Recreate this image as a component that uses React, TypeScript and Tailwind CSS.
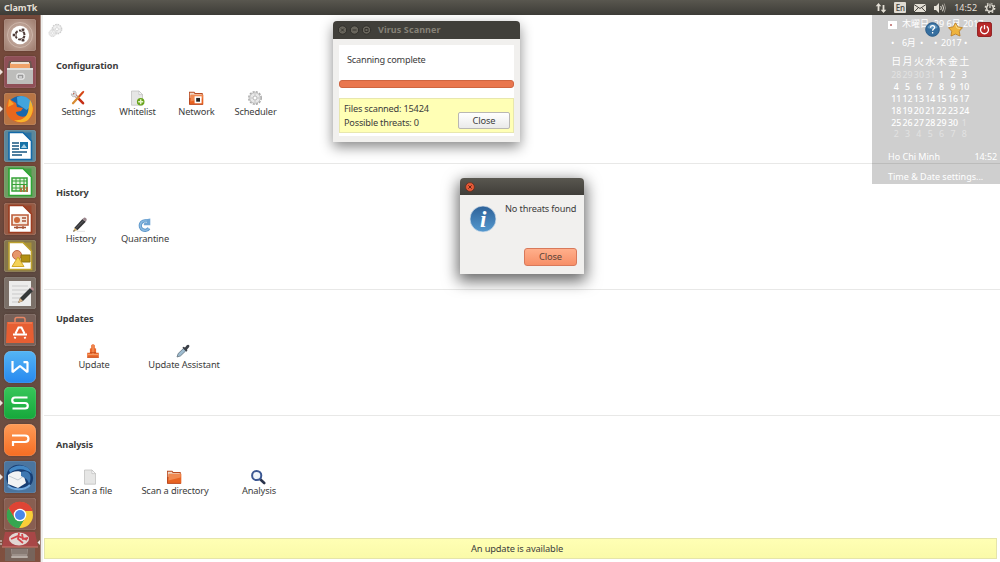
import React from "react";

type Item = { label: string; icon: React.ReactNode };

const Svg = ({ children, className = "h-4 w-4" }: { children: React.ReactNode; className?: string }) => (
  <svg viewBox="0 0 16 16" className={className} fill="none">{children}</svg>
);

const Sheet = () => (
  <>
    <path d="M2.5 1h7.4l3.6 3.6v10.6h-11z" fill="#e6e6e5" stroke="#bcbcba" strokeWidth=".7" />
    <path d="M9.9 1v3.6h3.6z" fill="#fafafa" stroke="#b0b0b0" strokeWidth=".5" />
  </>
);

const Pencil = () => (
  <>
    <path d="M5 14.3h8" stroke="#ccc" strokeWidth=".6" />
    <path d="M1.3 14.7l1.1-4 3 2.5z" fill="#d8b878" />
    <path d="M1.3 14.7l.5-1.6 1.1.9z" fill="#222" />
    <path d="M2.4 10.7L10.4 2l3.4 2.8-8.4 8.4z" fill="#343436" />
    <path d="M4 11.5l8-8.3" stroke="#707074" strokeWidth=".8" />
    <path d="M10.4 2l1.6-1.3c1.1-.5 3 1 2.7 2.2l-.9 1.9z" fill="#9a858c" />
  </>
);

const Folder = () => (
  <>
    <path d="M1 1.8h5.3l1 1.3h7.4v11.4H1z" fill="#b84a20" />
    <path d="M1.8 2.7h4.1l.7 1.3H13.8V8h-12z" fill="#f0d9c8" />
    <path d="M2.7 4.7h12.6v9.7H1.8z" fill="#e86322" />
    <path d="M2.7 5h12.2l-.4 3.5-12 3z" fill="#f08a52" />
    <path d="M1.2 14.4h13.8" stroke="#aa3510" strokeWidth=".6" />
  </>
);

const Gear = () => (
  <>
    <circle cx="8" cy="8" r="6.2" stroke="#a9a9a9" strokeWidth="1.5" strokeDasharray="2.1 1.15" />
    <circle cx="8" cy="8" r="5.3" fill="#e8e8e8" stroke="#b0b0b0" strokeWidth=".7" />
    <circle cx="8" cy="8" r="2" fill="#fff" stroke="#aaa" strokeWidth=".8" />
    <path d="M8 3.4v2.2M8 10.4v2.2M3.4 8h2.2M10.4 8h2.2" stroke="#bbb" strokeWidth=".8" />
  </>
);

const sections: { title: string; cell: string; height: string; items: Item[] }[] = [
  {
    title: "Configuration", cell: "w-[59px]", height: "h-[126px]",
    items: [
      { label: "Settings", icon: <Svg><path d="M4.2 4.2l8.8 9" stroke="#c62f17" strokeWidth="2.6" strokeLinecap="round" /><path d="M12.7 2.6L3 13.3" stroke="#d88c32" strokeWidth="2.2" strokeLinecap="round" /><path d="M13.8 1.3L9 6.8" stroke="#d63b1b" strokeWidth="1.5" /><path d="M5.4 1.4c-1-.4-1.9-.3-2.5.1l1.5 1.8-1.1 1.3-2-.9c-.3 2 1.6 3.8 3.7 2.9l1.5 1.4 1.2-1.2-1.7-1.8c.5-1.6.1-2.8-.6-3.6z" fill="#dedede" stroke="#999" strokeWidth=".5" /></Svg> },
      { label: "Whitelist", icon: <Svg><Sheet /><circle cx="11.7" cy="11.7" r="3.8" fill="#68a41c" /><path d="M11.7 9.2v5M9.2 11.7h5" stroke="#e8f4cd" strokeWidth="1.5" /></Svg> },
      { label: "Network", icon: <Svg><Folder /><path d="M6.6 6.3h7v7h-7z" fill="#fff" /><path d="M8.2 7.9h3.8v3.8H8.2z" fill="#222" /></Svg> },
      { label: "Scheduler", icon: <Svg><Gear /></Svg> },
    ],
  },
  {
    title: "History", cell: "w-16", height: "h-[126px]",
    items: [
      { label: "History", icon: <Svg><Pencil /></Svg> },
      { label: "Quarantine", icon: <Svg><path d="M12.9 11.2A4.7 4.7 0 1 1 10.6 4.2" stroke="#5f98cb" strokeWidth="3.4" /><path d="M14.3 1.5v6.8H7.8V6.2l3-.4-2-3.3z" fill="#6fa5d4" /><path d="M12.9 11.2A4.7 4.7 0 1 1 10.6 4.2" stroke="#8abae1" strokeWidth="1.5" /></Svg> },
    ],
  },
  {
    title: "Updates", cell: "w-[90px]", height: "h-[126px]",
    items: [
      { label: "Update", icon: <Svg><path d="M6.2 2.2q1.8-2 3.6 0v3l1.3.3v4.2h2.7v5H2.2v-5h2.7V5.5l1.3-.3z" fill="#e9692c" /><path d="M8 2v9M3 11.6h10" stroke="#f6a16d" strokeWidth="1" /><path d="M2.2 14.3h11.6M4.9 9.6h6.2" stroke="#bb4414" strokeWidth=".7" /></Svg> },
      { label: "Update Assistant", icon: <Svg><path d="M2 14l1.2-3.5 5.2-5 2.4 2.3-5.3 5.1z" fill="#9ebcd0" stroke="#62727e" strokeWidth=".8" /><path d="M7.4 4.8l1.2-1 1.4.7 1.8-2.2c1.4-1.5 3.6.2 2.2 2l-2 2.2.4 1.1-1 1.2z" fill="#3c4048" /></Svg> },
    ],
  },
  {
    title: "Analysis", cell: "w-[84px]", height: "h-[120px]",
    items: [
      { label: "Scan a file", icon: <Svg><Sheet /></Svg> },
      { label: "Scan a directory", icon: <Svg><Folder /></Svg> },
      { label: "Analysis", icon: <Svg><path d="M10.2 10.2l4 3.8" stroke="#29334b" strokeWidth="2.6" strokeLinecap="round" /><circle cx="6.7" cy="6.5" r="4.6" fill="#eef4fa" stroke="#3b5792" strokeWidth="2" /><path d="M4.4 6c.3-1.2 1-1.8 2.2-1.9" stroke="#fff" strokeWidth="1" /></Svg> },
    ],
  },
];

const LogoSvg = ({ children }: { children: React.ReactNode }) => (
  <svg viewBox="0 0 32 32" className="h-full w-full" fill="none">{children}</svg>
);

const Office = ({ color, children }: { color: string; children: React.ReactNode }) => (
  <LogoSvg>
    <path d="M5 2.5h14L27.5 11v18.5H5z" fill="#fff" stroke={color} strokeWidth="1.6" />
    <path d="M19 2.5L27.5 11V2.5z" fill={color} opacity=".65" />
    {children}
  </LogoSvg>
);

const launcher: { bg: string; running?: boolean; icon: React.ReactNode }[] = [
  { bg: "rounded-[3px] bg-[radial-gradient(circle,#d5c0b5,#9a7769)]", icon: <LogoSvg><circle cx="16" cy="16" r="12.5" stroke="#cdb5a9" strokeWidth="1" /><circle cx="16" cy="16" r="9.2" fill="#fff" /><circle cx="16" cy="16" r="4.5" stroke="#4e3b38" strokeWidth="2" strokeDasharray="7.9 1.52" strokeDashoffset="-.8" /><g fill="#4e3b38" stroke="#fff" strokeWidth=".6"><circle cx="10" cy="16" r="1.8" /><circle cx="19" cy="10.8" r="1.8" /><circle cx="19" cy="21.2" r="1.8" /></g></LogoSvg> },
  { bg: "rounded-[3px] bg-[#8f4f57]", running: true, icon: <LogoSvg><path d="M5 5h22l2 9H3z" fill="#6d5650" /><path d="M6 7h20v5H6z" fill="#f0a269" /><path d="M7 6h18v2H7z" fill="#eee1d3" /><path d="M3 12h26v16H3z" fill="#bdbdbb" /><path d="M3 12h26v2H3z" fill="#dededd" /><rect x="13" y="18" width="7" height="5" rx="1" fill="#999" stroke="#fff" /><path d="M15 21h3" stroke="#fff" /></LogoSvg> },
  { bg: "rounded-[3px] bg-[#b87545]", running: true, icon: <LogoSvg><circle cx="16" cy="16" r="13" fill="#1767ad" /><path d="M13 4c7-3 14 2 15.5 8l-6 5-9-6z" fill="#42a4dd" /><path d="M5 6c-3 5-4 12-1 17 5 8 18 9 23 1 3-4 3-9 2-13-1 7-3 10-7 12-5 2-10-1-10-4l5-1 2-3-6-1-1-4z" fill="#e9671d" /><path d="M26 7c5 7 3 15-2 20-4 3-10 3-14 0 7 1 12-2 14-8z" fill="#f7b32b" /><path d="M5 6l-1 8 6-3z" fill="#f7a22b" /></LogoSvg> },
  { bg: "rounded-[3px] bg-[#5c879b]", icon: <Office color="#1269a8"><path d="M8 13h7M8 16h7M8 19h7M8 22h15M8 25h10" stroke="#165580" strokeWidth="1.6" /><path d="M16 12h8v7h-8z" fill="#1672a7" /><path d="M17 18l3-4 3 4z" fill="#a8d2e6" /></Office> },
  { bg: "rounded-[3px] bg-[#719c64]", icon: <Office color="#2ca533"><path d="M8 12h15v13H8z" fill="#e4f4dc" stroke="#36a238" strokeWidth="1.5" /><path d="M12 12v13M16 12v13M20 12v13M8 15h15M8 18.5h15M8 22h15" stroke="#36a238" /><path d="M17 26v-4M20 26v-7M23 26v-5" stroke="#a8773c" strokeWidth="2" /></Office> },
  { bg: "rounded-[3px] bg-[#965b45]", icon: <Office color="#9c3c20"><path d="M8 12h16v10H8z" fill="#f5e7dc" stroke="#bd5d3a" strokeWidth="1.6" /><circle cx="13" cy="17" r="3" fill="#cc693b" /><path d="M18 15h4M18 18h4M13 23v3M19 23v3M10 24.5h12" stroke="#a65236" strokeWidth="1.3" /></Office> },
  { bg: "rounded-[3px] bg-[#85764c]", icon: <Office color="#bba02e"><circle cx="13" cy="15" r="4.5" fill="#e6976c" stroke="#c26747" /><path d="M17 15h9v7h-9z" fill="#b29013" stroke="#8d730e" /><path d="M14 17l6 9.5H8z" fill="#f4d257" stroke="#d1a729" /></Office> },
  { bg: "rounded-[3px] bg-[#7b7068]", icon: <LogoSvg><path d="M5 4h22v25H5z" fill="#ececeb" /><path d="M8 9h16M8 13h16M8 17h16M8 21h10M8 25h8" stroke="#c9c9c9" /><path d="M14 26l2-5 10-10 3 3-10 10z" fill="#343838" /><path d="M14 26l2-5 3 3z" fill="#d5b184" /><path d="M26 11l2-1 2 2-1 2z" fill="#b58a90" /></LogoSvg> },
  { bg: "rounded-[3px] bg-[#776159]", icon: <LogoSvg><path d="M11 9V5.5q0-2 2-2h6q2 0 2 2V9" stroke="#e88563" strokeWidth="1.5" /><path d="M3 8h26l1 21H2z" fill="#e75e32" /><path d="M4 9h24" stroke="#f18a64" /><path d="M11.5 19.5l3-6h3l3 6M9 20.5h14M11.5 23l-1 1.5M20.5 23l1 1.5" stroke="#fff" strokeWidth="2" /></LogoSvg> },
  { bg: "rounded-[7px] bg-[linear-gradient(#55b5f4,#2688f0)]", icon: <LogoSvg><path d="M8.5 10v11.2l7.5-6.2 7.5 6.2V11.2h-4" stroke="#fff" strokeWidth="2.2" strokeLinejoin="bevel" /></LogoSvg> },
  { bg: "rounded-[5px] bg-[linear-gradient(#38c65a,#16a83b)]", running: true, icon: <LogoSvg><path d="M23.5 10.5H11c-3.7 0-3.7 5.5 0 5.5h10c3.7 0 3.7 5.5 0 5.5H8.5" stroke="#fff" strokeWidth="2.2" /></LogoSvg> },
  { bg: "rounded-[7px] bg-[linear-gradient(#ff9b57,#f56d23)]", icon: <LogoSvg><path d="M8 11.5h13c4.6 0 4.6 6.5 0 6.5H9v4" stroke="#fff" strokeWidth="2.2" /></LogoSvg> },
  { bg: "rounded-[3px] bg-[#4b759f]", running: true, icon: <LogoSvg><path d="M5 8c8-9 23-3 24 8 1 9-9 15-18 12C2 25 0 15 5 8z" fill="#173d73" /><path d="M5 9C12 2 25 3 28 13c-7-6-16-6-22-1z" fill="#4387c4" /><path d="M4 14c4-4 11-5 15-2l3 10-8 5-10-4z" fill="#f2f3f4" /><path d="M5 15l9 4 6-4" stroke="#c3cbd2" /><path d="M17 11c8-3 12 4 8 12-1-5-4-6-8-8z" fill="#3e77b1" /><path d="M4 25c5 4 16 5 22-1" stroke="#74abe0" strokeWidth="2" /></LogoSvg> },
  { bg: "rounded-[3px] bg-[#885e51]", icon: <LogoSvg><circle cx="16" cy="17" r="13" fill="#f9ce38" /><path d="M4.7 10.5A13 13 0 0 1 28.5 13H16z" fill="#de4435" /><path d="M4.5 10.5A13 13 0 0 0 15 30l6-10-10 0z" fill="#36a650" /><path d="M4.7 10.5L11 21l5-8h12.5A13 13 0 0 0 4.7 10.5" fill="#de4435" /><path d="M4.7 10.5A13 13 0 0 0 15 30l5.5-9.5H10.5z" fill="#36a650" /><circle cx="16" cy="17" r="6.3" fill="#fff" /><circle cx="16" cy="17" r="5" fill="#4a87e8" /></LogoSvg> },
];

const TopBar = () => (
  <header className="flex h-[15px] shrink-0 items-center justify-between bg-linear-to-b from-[#59574f] to-[#3d3c37] pr-1 pl-1 text-[#e3dfd5]">
    <span className="text-[9px] font-bold tracking-normal">ClamTk</span>
    <div className="flex items-center">
      <svg viewBox="0 0 12 12" className="mr-[7px] h-3 w-3" fill="currentColor"><path d="M3.5 1L6.3 4.2H4.4V9H2.6V4.2H.7zM8.5 11L5.7 7.8h1.9V3h1.8v4.8h1.9z" /></svg>
      <span className="mr-[8px] flex h-[11px] w-3 items-center justify-center rounded-[1px] bg-[#dfdbd2] text-[8px] font-medium text-[#45433d]">En</span>
      <svg viewBox="0 0 12 8" className="mr-[8px] h-2 w-3"><path d="M0 0h12v8H0z" fill="#e3dfd5" /><path d="M0 .5l6 4 6-4M0 8l4.4-4.3M12 8L7.6 3.7" stroke="#47453f" fill="none" /></svg>
      <svg viewBox="0 0 12 12" className="mr-[8px] h-3 w-3" fill="none" stroke="currentColor"><path d="M0 4h2l3-3v10L2 8H0z" fill="currentColor" stroke="none" /><path d="M6.7 4q1.3 2 0 4M8.5 2.7q2 3.3 0 6.6" /><path d="M10.2 1.5q2.5 4.5 0 9" opacity=".5" /></svg>
      <span className="mr-[7px] text-[9px] tracking-[-0.05px]">14:52</span>
      <svg viewBox="0 0 12 12" className="h-3 w-3" fill="none" stroke="currentColor"><circle cx="6" cy="6" r="3.3" strokeWidth="1.4" /><circle cx="6" cy="6" r="4.7" strokeWidth="1.4" strokeDasharray="1.8 1.89" /><path d="M6 1v5" stroke="#4b4943" strokeWidth="2.8" /><path d="M6 1.5v4.5" strokeWidth="1.2" /></svg>
    </div>
  </header>
);

const Launcher = () => (
  <nav className="flex w-[41px] shrink-0 flex-col overflow-hidden border-r border-[#a68b81] bg-linear-to-b from-[#74493b] from-35% via-[#594a43] via-50% to-[#80503f] pt-[4px]">
    {launcher.map((l, i) => (
      <div key={i} className="flex h-[36.85px] w-10 shrink-0 items-start">
        <svg viewBox="0 0 4 8" className="mt-[12px] h-2 w-1"><path d="M0 1l3 3-3 3z" fill={l.running ? "#eee2da" : "none"} /></svg>
        <div className={`h-8 w-8 shadow-[inset_0_0_1px_#ffffffaa,0_0_2px_#3b211988] ${l.bg}`}>{l.icon}</div>
      </div>
    ))}
    <svg viewBox="0 0 40 32" className="-mt-[5px] h-8 w-10 shrink-0" fill="none">
      <path d="M5 2h30l3 15H2z" fill="#a84747" />
      <ellipse cx="19" cy="9" rx="10" ry="6.5" fill="#e1d7d2" />
      <path d="M11 9l7-3 9 4M19 3l-1 6 5 4M22 4l1 5 5-1" stroke="#d3454b" strokeWidth="1.8" />
      <path d="M2 17h36" stroke="#c77e75" />
      <path d="M0 11h2M0 14h2" stroke="#eee" />
      <path d="M40 10l-2.5 2.5L40 15z" fill="#eee" />
      <path d="M5 18h30v13H5z" fill="#77645b" />
      <path d="M11 19h17l-1 9H12z" fill="#9c9089" />
      <path d="M12 19h15v5H12z" fill="#887b74" />
      <path d="M11 27h17" stroke="#d0c7c0" />
    </svg>
  </nav>
);

const days = [28, 29, 30, 31, ...Array.from({ length: 30 }, (_, i) => i + 1), 1, 2, 3, 4, 5, 6, 7, 8];

const CalendarOverlay = () => (
  <aside className="absolute top-[15px] right-0 h-[169px] w-32 overflow-hidden bg-black/19 text-[9px] leading-3 tracking-normal text-white">
    <div className="flex h-[18px] items-center gap-[5px] pl-4 whitespace-nowrap">
      <svg viewBox="0 0 9 9" className="h-[9px] w-[9px]"><path d="M0 1h9v8H0z" fill="#fff" /><path d="M2 4h2v2H2z" fill="#c98a8a" /></svg>
      <span>木曜日, 29 6月 2017</span>
    </div>
    <div className="flex h-[19px] items-center pl-[19px]">
      <span className="w-[11px]">•</span><span className="w-[18px] tracking-[-0.3px]">6月</span><span className="w-[14px]">•</span><span className="w-[7px]">•</span><span className="w-[23px]">2017</span><span>•</span>
    </div>
    <div className="grid h-[17px] w-[98px] grid-cols-7 items-center pl-[18.5px] text-center text-[10px]">
      {"日月火水木金土".split("").map((d) => <span key={d}>{d}</span>)}
    </div>
    <div className="grid w-[98px] auto-rows-[11.9px] grid-cols-7 items-center pl-[18.5px] text-center text-[8.8px]">
      {days.map((d, i) => <span key={i} className={i < 4 || i > 33 ? "opacity-40" : "font-medium"}>{d}</span>)}
    </div>
    <div className="mt-[11px] flex justify-between pr-[3px] pl-4 text-[9px]"><span>Ho Chi Minh</span><span className="tracking-[-0.1px]">14:52</span></div>
    <div className="mt-[8px] pl-4 text-[9px]">Time &amp; Date settings...</div>
  </aside>
);

const HeaderButtons = () => (
  <div className="absolute top-[22px] right-2 flex items-center">
    <svg viewBox="0 0 15 15" className="mr-px h-[15px] w-[15px]"><circle cx="7.5" cy="7.5" r="6.8" fill="#356e9f" stroke="#295b88" /><path d="M2.5 6a5.2 5.2 0 0 1 10 0q-5 2-10 0" fill="#6297bf" /><path d="M5.5 5.7c.1-3 4.5-2.5 4.1 0-.2 1.3-2 1.5-2 3M7.6 10v1.4" fill="none" stroke="#fff" strokeWidth="1.3" /></svg>
    <svg viewBox="0 0 15 15" className="ml-[7px] h-[15px] w-[15px]"><path d="M7.5.8l2.3 4 4.7.9-3.2 3.5.7 4.8-4.5-1.9L3 14l.7-4.8L.5 5.7l4.7-.9z" fill="#eeb33d" stroke="#b77a22" strokeWidth=".8" strokeLinejoin="round" /><path d="M7.5 2.7L9 6l3 .5" fill="none" stroke="#fbdc88" /></svg>
    <svg viewBox="0 0 15 15" className="ml-[14px] h-[15px] w-[15px]"><rect x=".6" y=".6" width="13.8" height="13.8" rx="1.5" fill="#b92929" stroke="#8d1b1c" /><path d="M5.3 4.4a4 4 0 1 0 4.4 0M7.5 3v4.3" fill="none" stroke="#fff" strokeWidth="1.3" /></svg>
  </div>
);

const MainWindow = () => (
  <main className="flex min-w-0 flex-1 flex-col border-l-2 border-[#efefed] bg-white pl-px">
    <div className="flex h-[23px] shrink-0 items-end pl-[4px]"><Svg className="h-[15px] w-[15px] opacity-60"><g transform="translate(3 0) scale(.82)"><Gear /></g><g transform="translate(0 6) scale(.6)"><Gear /></g></Svg></div>
    {sections.map((s, i) => (
      <section key={s.title} className={`flex ${s.height} shrink-0 flex-col pl-[5px] ${i ? "pt-[23px]" : "pt-[22px]"} ${i < 3 ? "border-b border-[#e8e8e7]" : ""}`}>
        <h2 className="pl-[7px] text-[9.2px] leading-3 font-bold tracking-[-0.1px]">{s.title}</h2>
        <div className="mt-[18px] flex">
          {s.items.map((item) => (
            <div key={item.label} className={`flex ${s.cell} flex-col items-center`}>
              <div className="-mr-px -ml-[3px]">{item.icon}</div>
              <span className="text-[9.3px] leading-3 whitespace-nowrap">{item.label}</span>
            </div>
          ))}
        </div>
      </section>
    ))}
    <footer className="mt-auto mr-[3px] mb-[3px] flex h-[21px] shrink-0 items-center justify-center border border-[#e5e5aa] bg-linear-to-b from-[#ffffb4] to-[#fafaa9] pr-[7px] text-[9.3px]">An update is available</footer>
  </main>
);

const Scanner = () => (
  <section className="absolute top-[21px] left-[333px] flex h-[121px] w-[187px] flex-col rounded-t-[4px] bg-[#f1f0ee] shadow-[0_5px_13px_#0007]">
    <div className="flex h-[18px] shrink-0 items-center rounded-t-[4px] bg-[#403f3a] pl-[5px] text-[9px] font-bold tracking-[0.1px] text-[#858177]">
      <svg viewBox="0 0 34 10" className="mr-[6px] h-[10px] w-[34px]" fill="none"><g fill="#69665d" stroke="#302f2b"><circle cx="4.5" cy="5" r="4.2" /><circle cx="16.5" cy="5" r="4.2" /><circle cx="28.5" cy="5" r="4.2" /></g><path d="M3 3.5l3 3m0-3l-3 3M14.5 5h4M27 3.5h3v3h-3z" stroke="#34332e" /></svg>
      Virus Scanner
    </div>
    <div className="mx-1.5 mt-[6px] mb-[6px] flex flex-1 flex-col bg-white">
      <span className="mt-[9px] ml-2 text-[9.2px] leading-3 tracking-[-0.22px]">Scanning complete</span>
      <div className="mt-[14px] h-2 shrink-0 rounded-[3px] border border-[#cf6541] bg-[#e9764e]" />
      <div className="mt-[10px] flex h-[35px] shrink-0 justify-between border border-[#e8e7ad] bg-[#ffffb5] pr-[3px] pl-1">
        <div className="mt-[3px] text-[9.2px] leading-[14px] whitespace-nowrap tracking-[-0.2px]"><div>Files scanned: 15424</div><div>Possible threats: 0</div></div>
        <button className="mt-[13px] h-[17px] w-[52px] rounded-[2px] border border-[#b9b7b3] bg-linear-to-b from-white to-[#eaeaea] text-[9.3px] leading-3">Close</button>
      </div>
    </div>
  </section>
);

const Result = () => (
  <section className="absolute top-[178px] left-[460px] flex h-[96px] w-[124px] flex-col rounded-t-[4px] bg-[#f1f0ee] shadow-[0_5px_15px_2px_#0009]">
    <div className="flex h-[17px] shrink-0 items-center rounded-t-[4px] bg-linear-to-b from-[#595750] to-[#403e39] pl-[5px]">
      <svg viewBox="0 0 10 10" className="h-[10px] w-[10px]"><circle cx="5" cy="5" r="4.4" fill="#e75a37" stroke="#672e20" strokeWidth=".8" /><path d="M3.4 3.4l3.2 3.2m0-3.2L3.4 6.6" stroke="#612516" /></svg>
    </div>
    <div className="flex h-[53px] pt-[7px] pl-[9px]">
      <svg viewBox="0 0 28 28" className="mt-[3px] h-7 w-7 shrink-0"><defs><linearGradient id="info" x2="0" y2="1"><stop stopColor="#2d6198" /><stop offset="1" stopColor="#5599cf" /></linearGradient></defs><circle cx="14" cy="14" r="13" fill="url(#info)" stroke="#d9e3ec" strokeWidth=".7" /><text x="14.2" y="22" fill="#fff" textAnchor="middle" fontFamily="Liberation Serif, serif" fontStyle="italic" fontWeight="700" fontSize="23">i</text></svg>
      <span className="mt-px ml-2 h-3 text-[9.2px] leading-3 whitespace-nowrap">No threats found</span>
    </div>
    <button className="mr-[7px] h-[18px] w-[53px] shrink-0 self-end rounded-[3px] border border-[#d8795a] bg-linear-to-b from-[#ffaf8b] to-[#f78f67] text-[9.3px] leading-3 text-[#5b4338]">Close</button>
  </section>
);

export default function App() {
  return (
    <div className="relative flex h-[562px] w-[1000px] flex-col overflow-hidden bg-[#efefed] font-['Noto_Sans','Noto_Sans_CJK_JP',sans-serif] tracking-[-0.15px] text-[#3c3c3c]">
      <TopBar />
      <div className="flex min-h-0 flex-1"><Launcher /><MainWindow /></div>
      <CalendarOverlay />
      <HeaderButtons />
      <Scanner />
      <Result />
    </div>
  );
}
